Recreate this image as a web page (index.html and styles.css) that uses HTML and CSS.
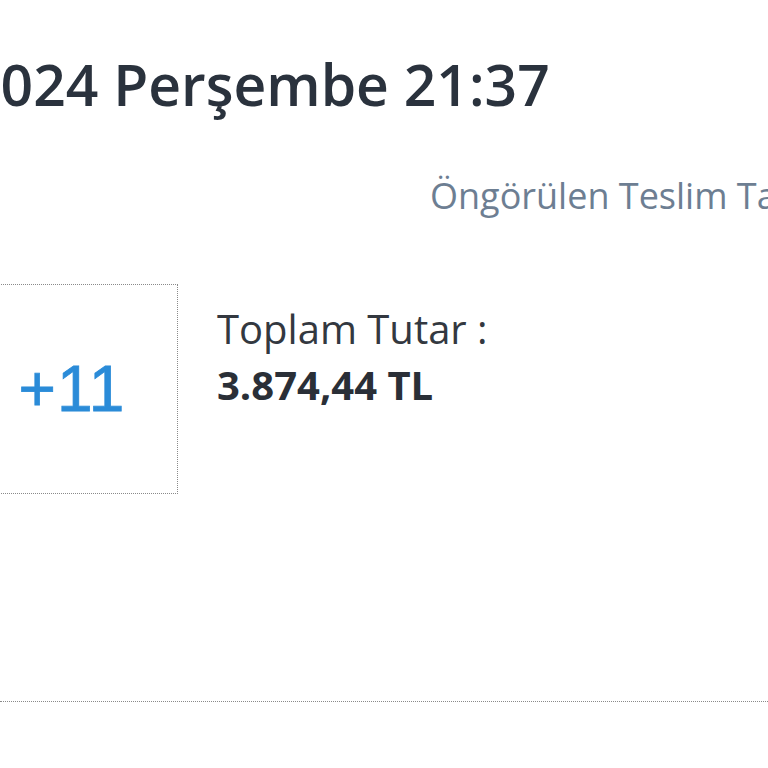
FILE: index.html
```html
<!DOCTYPE html>
<html lang="tr">
<head>
<meta charset="utf-8">
<link rel="stylesheet" href="styles.css">
</head>
<body>
<div class="page">
  <h1 class="order-date">2024 Perşembe 21:37</h1>
  <div class="delivery">Öngörülen Teslim Tarihi</div>
  <div class="order-row">
    <div class="more-box">+11</div>
    <div class="total">
      <div class="total-label">Toplam Tutar :</div>
      <div class="total-value">3.874,44 TL</div>
    </div>
  </div>
  <div class="divider"></div>
</div>
</body>
</html>
```
FILE: styles.css
```css
html, body {
  margin: 0;
  padding: 0;
  background: #ffffff;
  overflow: hidden;
}
.page {
  width: 768px;
  height: 768px;
  overflow: hidden;
  font-family: "Open Sans", "Noto Sans", sans-serif;
  padding-top: 49px;
  box-sizing: border-box;
}
.order-date {
  margin: 0 0 0 -32px;
  font-size: 57px;
  line-height: 70px;
  font-weight: 600;
  color: #2a323d;
  white-space: nowrap;
}
.delivery {
  margin-top: 55px;
  padding-left: 430px;
  font-size: 36px;
  line-height: 44px;
  color: #6d7e92;
  white-space: nowrap;
}
.order-row {
  margin-top: 66px;
  display: flex;
  align-items: flex-start;
}
.more-box {
  margin-left: -34px;
  width: 210px;
  height: 208px;
  border: 1px dotted #8a8a8a;
  display: flex;
  align-items: center;
  justify-content: center;
  font-family: "Liberation Sans", Arial, sans-serif;
  font-size: 64px;
  letter-spacing: 1px;
  -webkit-text-stroke: 0.8px #2a8bd8;
  color: #2a8bd8;
  flex-shrink: 0;
}
.total {
  margin-left: 39px;
  padding-top: 17px;
}
.total-label {
  font-size: 40px;
  line-height: 56px;
  color: #333840;
}
.total-value {
  font-size: 40px;
  line-height: 56px;
  font-weight: 700;
  color: #2a2f37;
}
.divider {
  margin-top: 207px;
  border-top: 1px dotted #8a8a8a;
}
```
